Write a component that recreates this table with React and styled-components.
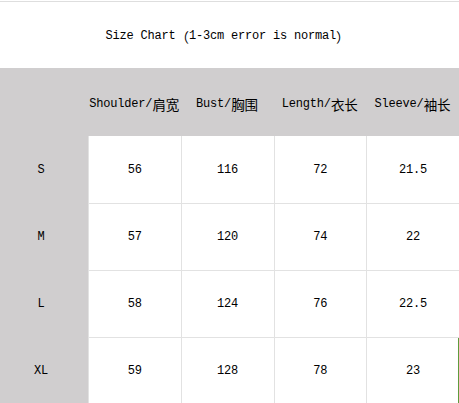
import React from 'react';
import styled, { createGlobalStyle } from 'styled-components';

const GlobalStyle = createGlobalStyle`
  html, body {
    margin: 0;
    padding: 0;
    background: #fff;
  }
  body {
    font-family: 'Liberation Mono', 'Noto Sans CJK SC', monospace;
    color: #000;
  }
`;

const Sheet = styled.div`
  width: 459px;
  height: 403px;
  overflow: hidden;
  background: #fff;
`;

const TopRule = styled.div`
  height: 1px;
  border-bottom: 1px solid #dedede;
`;

const Title = styled.div`
  height: 66px;
  display: flex;
  align-items: center;
  justify-content: center;
  padding-right: 4px;
  padding-top: 2px;
  box-sizing: border-box;
  font-size: 12px;
  letter-spacing: -0.2px;
  white-space: nowrap;
`;

// Chinese glyphs are full width, a bit bigger than the latin ones
const Cjk = styled.span`
  font-family: 'Noto Sans CJK SC', sans-serif;
  font-size: 13.5px;
  letter-spacing: 0;
  text-spacing-trim: space-all;
`;

const Grid = styled.div`
  display: grid;
  grid-template-columns: 88px repeat(4, 1fr);
  grid-auto-rows: 67px;
`;

const Cell = styled.div`
  display: flex;
  align-items: center;
  justify-content: center;
  font-size: 12px;
  letter-spacing: -0.2px;
  white-space: nowrap;
  background: ${(p) => (p.$head ? '#d0cecf' : '#fff')};
  padding-right: ${(p) => (p.$side ? '6px' : '0')};
  border-left: ${(p) => (p.$head ? 'none' : '1px solid #e2e2e2')};
  border-top: ${(p) => (p.$head || p.$first ? 'none' : '1px solid #e2e2e2')};
  box-shadow: ${(p) => (p.$selected ? 'inset -1px 0 0 #5e9c3c' : 'none')};
  box-sizing: border-box;
`;

const HeaderRow = styled(Grid)`
  grid-auto-rows: 68px;

  & > div {
    padding-top: 3px;
  }
`;

const headers = [
  ['Shoulder/', '肩宽'],
  ['Bust/', '胸围'],
  ['Length/', '衣长'],
  ['Sleeve/', '袖长'],
];

const rows = [
  ['S', '56', '116', '72', '21.5'],
  ['M', '57', '120', '74', '22'],
  ['L', '58', '124', '76', '22.5'],
  ['XL', '59', '128', '78', '23'],
];

export default function App() {
  return (
    <Sheet>
      <GlobalStyle />
      <TopRule />
      <Title>
        Size Chart<Cjk>（</Cjk>1-3cm error is normal<Cjk>）</Cjk>
      </Title>
      <HeaderRow>
        <Cell $head $side />
        {headers.map(([en, zh]) => (
          <Cell $head key={en}>
            {en}
            <Cjk>{zh}</Cjk>
          </Cell>
        ))}
      </HeaderRow>
      <Grid>
        {rows.map((row, r) =>
          row.map((val, c) =>
            c === 0 ? (
              <Cell $head $side key={r + '-' + c}>
                {val}
              </Cell>
            ) : (
              <Cell
                key={r + '-' + c}
                $first={r === 0}
                $selected={r === rows.length - 1 && c === row.length - 1}
              >
                {val}
              </Cell>
            )
          )
        )}
      </Grid>
    </Sheet>
  );
}
